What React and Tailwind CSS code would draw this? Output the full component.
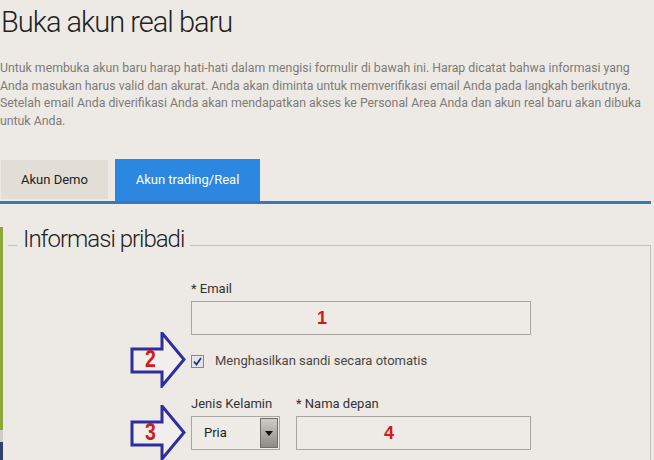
import React from "react";

// Annotation arrow (blue outline pointing right) with red step number
function StepArrow({ num, className }) {
  return (
    <div className={`absolute w-[56px] h-[56px] ${className}`}>
      <svg width="56" height="56" viewBox="0 0 56 56" className="absolute left-0 top-0">
        <polygon
          points="2,17 32,17 32,1 54,27.5 32,54 32,40 2,40"
          fill="#f1efeb"
          stroke="#2e2e9e"
          strokeWidth="3"
          strokeLinejoin="miter"
        />
      </svg>
      <span className="absolute left-[14px] top-[16px] text-[23px] leading-none font-bold text-[#d41a1a] font-['Liberation_Sans',sans-serif] scale-x-[0.85]">
        {num}
      </span>
    </div>
  );
}

export default function App() {
  return (
    <div className="relative w-[654px] h-[460px] overflow-hidden bg-[#edeae6] font-['Roboto',sans-serif] text-[#333]">
      <h1 className="pt-[4px] pl-[1px] text-[29px] leading-[36px] font-light tracking-[-1px] text-[#222]">
        Buka akun real baru
      </h1>

      <p className="mt-[20px] text-[12.3px] leading-[17.5px] text-[#7d7a77] whitespace-nowrap">
        Untuk membuka akun baru harap hati-hati dalam mengisi formulir di bawah ini. Harap dicatat bahwa informasi yang
        <br />
        Anda masukan harus valid dan akurat. Anda akan diminta untuk memverifikasi email Anda pada langkah berikutnya.
        <br />
        Setelah email Anda diverifikasi Anda akan mendapatkan akses ke Personal Area Anda dan akun real baru akan dibuka
        <br />
        untuk Anda.
      </p>

      {/* tabs */}
      <div className="mt-[29px] w-[651px] flex items-end gap-[7px] border-b-[3px] border-[#3a78b5]">
        <div className="ml-[1px] w-[107px] h-[39px] mb-[2px] bg-[#e2ddd5] flex items-center justify-center text-[13px] text-[#222]">
          Akun Demo
        </div>
        <div className="w-[145px] h-[42px] bg-[#2b87e0] flex items-center justify-center text-[13px] text-white">
          Akun trading/Real
        </div>
      </div>

      {/* personal info section */}
      <div className="flex mt-[21px]">
        <div className="w-[3px] mt-[2px] flex flex-col">
          <div className="h-[203px] bg-[#8ca73c]" />
          <div className="h-[12px] bg-[#cfd0c4]" />
          <div className="h-[30px] bg-[#33406a]" />
        </div>
        <div className="flex-1 pt-[20px]">
          <div className="relative ml-[5px] w-[643px] h-[300px] border-t border-r border-[#c3bfbb]">
            <div className="absolute left-[9px] top-[-22px] px-[6px] bg-[#edeae6] text-[24px] leading-[30px] font-light tracking-[-1px] text-[#222]">
              Informasi pribadi
            </div>

            <div className="pl-[183px] pt-[35px] text-[13px] text-[#333]">
              <div className="leading-[16px]">* Email</div>
              <div className="mt-[4px] w-[340px] h-[34px] border border-[#a9a6a2] bg-[#eeebe7] flex items-center pl-[125px]">
                <span className="text-[18px] font-bold text-[#d41a1a] font-['Liberation_Sans',sans-serif]">1</span>
              </div>

              <div className="mt-[18px] flex items-center gap-[11px]">
                <div className="w-[13px] h-[13px] border border-[#7c87a8] bg-[#e4e4ec] flex items-center justify-center">
                  <svg width="9" height="9" viewBox="0 0 9 9">
                    <path d="M1 4.5 L3.5 7.5 L8 1" fill="none" stroke="#2b3170" strokeWidth="1.8" />
                  </svg>
                </div>
                <span className="leading-[16px] text-[#4a4744]">Menghasilkan sandi secara otomatis</span>
              </div>

              <div className="mt-[27px] flex gap-[16px]">
                <div className="w-[89px]">
                  <div className="leading-[16px]">Jenis Kelamin</div>
                  <div className="mt-[4px] w-[89px] h-[34px] border border-[#a9a6a2] bg-[#efece8] flex items-center justify-between pl-[12px] pr-[1px]">
                    <span className="text-[#222]">Pria</span>
                    <div className="w-[18px] h-[30px] bg-gradient-to-b from-[#cfccc8] to-[#8f8b88] border border-[#6f6c69] flex items-center justify-center">
                      <svg width="8" height="5" viewBox="0 0 8 5">
                        <polygon points="0,0 8,0 4,5" fill="#111" />
                      </svg>
                    </div>
                  </div>
                </div>
                <div>
                  <div className="leading-[16px]">* Nama depan</div>
                  <div className="mt-[4px] w-[235px] h-[34px] border border-[#a9a6a2] bg-[#eeebe7] flex items-center pl-[87px]">
                    <span className="text-[18px] font-bold text-[#d41a1a] font-['Liberation_Sans',sans-serif]">4</span>
                  </div>
                </div>
              </div>
            </div>
          </div>
        </div>
      </div>

      <StepArrow num="2" className="left-[130px] top-[332px]" />
      <StepArrow num="3" className="left-[130px] top-[405px]" />
    </div>
  );
}
